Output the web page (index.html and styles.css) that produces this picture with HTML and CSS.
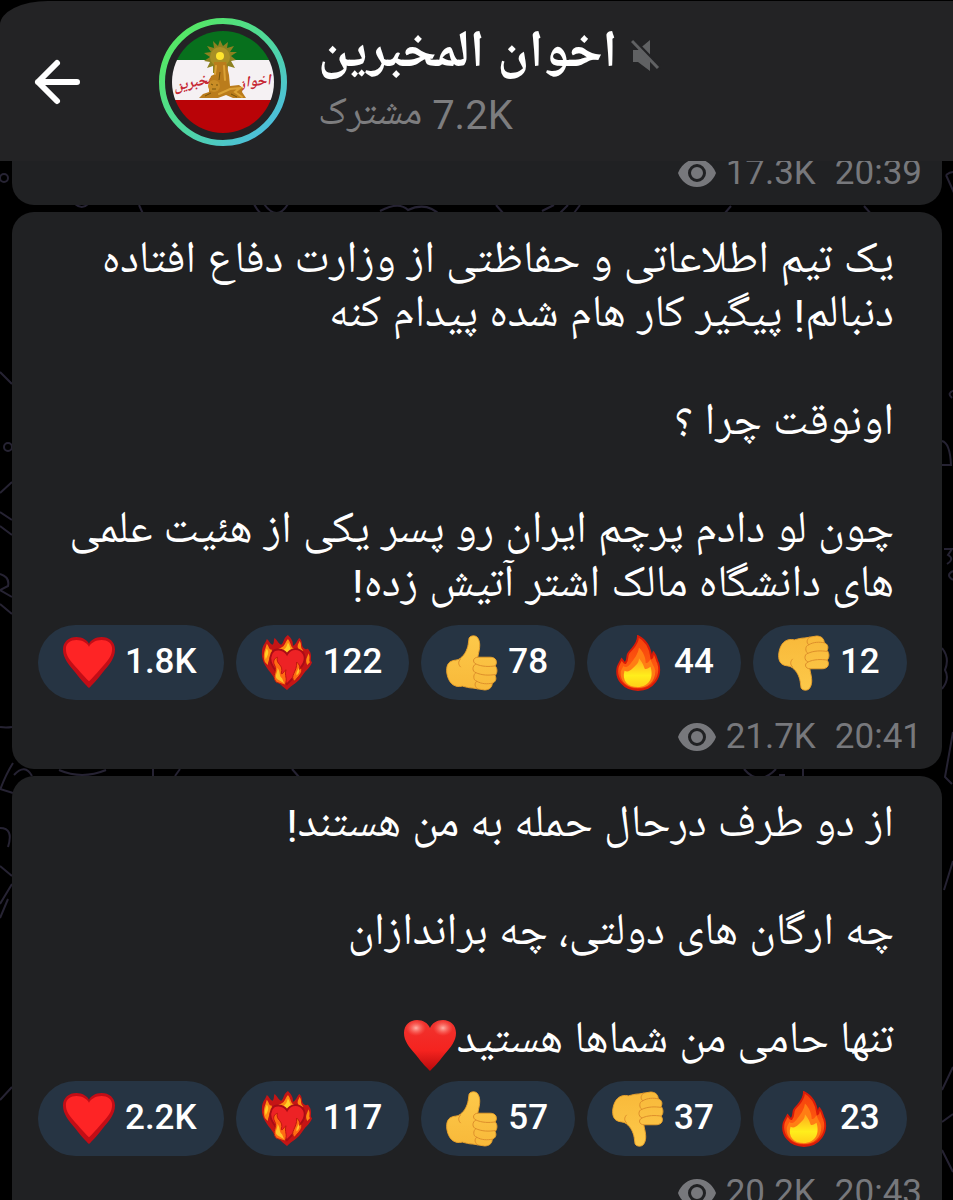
FILE: index.html
```html
<!DOCTYPE html>
<html lang="fa">
  <head>
    <meta charset="UTF-8" />
    <meta name="viewport" content="width=device-width, initial-scale=1.0" />
    <title>اخوان المخبرین</title>
    <link rel="stylesheet" href="styles.css">
  </head>
  <body>
    <!-- shared icons -->
    <svg class="sprite" aria-hidden="true">
      <defs>
        <linearGradient id="flame-outer" x1="0" y1="0" x2="0" y2="1">
          <stop offset="0" stop-color="#f4400c" />
          <stop offset="0.6" stop-color="#ff5a10" />
          <stop offset="1" stop-color="#e62a08" />
        </linearGradient>
        <linearGradient id="flame-inner" x1="0" y1="0" x2="0" y2="1">
          <stop offset="0" stop-color="#ffa81c" />
          <stop offset="0.6" stop-color="#ffee1c" />
          <stop offset="1" stop-color="#ffd018" />
        </linearGradient>
        <linearGradient id="thumb-fill" x1="0" y1="0" x2="0" y2="1">
          <stop offset="0" stop-color="#fdc94a" />
          <stop offset="1" stop-color="#f8b93a" />
        </linearGradient>
        <linearGradient id="heart-red" x1="0" y1="0" x2="0" y2="1">
          <stop offset="0" stop-color="#f0342f" />
          <stop offset="0.6" stop-color="#f5231f" />
          <stop offset="1" stop-color="#b80a0c" />
        </linearGradient>
        <radialGradient id="gloss">
          <stop offset="0" stop-color="#ffb3a8" />
          <stop offset="1" stop-color="#ff6a60" stop-opacity="0" />
        </radialGradient>
      </defs>
      <symbol id="heart" viewBox="0 0 54 58">
        <path d="M27 55C24 52 19 47 13 39C6 31 0 24 0 15C0 7 6 2 14 2C20 2 25 5 27 9C29 5 34 2 40 2C48 2 54 7 54 15C54 24 48 31 41 39C35 47 30 52 27 55Z" fill="#c30d16" />
        <path d="M27 48C24 45 20 41 15 35C7 26 3 22 3 14C3 8 8 5 14 5C20 5 25 8 27 12C29 8 34 5 40 5C46 5 51 8 51 14C51 22 47 26 39 35C34 41 30 45 27 48Z" fill="#fe2425" />
      </symbol>
      <symbol id="heart-gloss" viewBox="0 0 54 58">
        <path d="M27 54C24 51 19 46 13 38C6 30 1 24 1 16C1 8 7 3 14 3C20 3 25 6 27 11C29 6 34 3 40 3C47 3 53 8 53 16C53 24 48 30 41 38C35 46 30 51 27 54Z" fill="url(#heart-red)" />
        <ellipse cx="13" cy="11" rx="10" ry="8" fill="url(#gloss)" />
        <ellipse cx="40" cy="11" rx="10" ry="8" fill="url(#gloss)" />
      </symbol>
      <symbol id="heart-fire" viewBox="0 0 54 58">
        <path d="M27 57C21 52 15 47 10 39C4 32 0 25 1 17C1 11 5 8 6 4C9 6 9 9 12 10C14 8 13 5 14 3C17 5 18 9 21 10C24 8 23 3 28 0C31 3 34 7 33 11C37 10 37 5 40 3C44 7 41 11 45 14C48 16 48 12 50 16C54 21 50 27 53 28C52 33 47 36 43 42C39 49 32 52 27 57Z" fill="#c51515" />
        <path d="M4 28C1 20 5 14 6 9C9 13 8 15 11 15C13 20 8 23 7 31ZM18 14C25 13 25 7 28 4C32 9 30 13 36 15L27 19ZM38 12C38 9 40 8 40 6C43 10 40 13 44 16L40 18ZM48 31C45 25 49 23 49 19C52 23 49 27 51 28Z" fill="#ff8a12" />
        <path d="M23 16C27 13 27 10 28 8C31 12 29 14 33 16L27 18ZM5 25C3 20 5 17 6 14C9 18 7 21 5 25Z" fill="#ffcf27" />
        <path d="M27 51C22 47 19 43 16 38C10 30 8 25 11 19C14 13 23 14 27 20C31 13 40 13 44 19C48 26 43 32 38 38C35 43 31 47 27 51Z" fill="#ed2225" stroke="#a90d16" stroke-width="2" />
        <path d="M16 49C10 42 18 38 14 31C12 27 14 24 17 23C15 31 24 30 21 40C23 41 24 37 26 36C24 43 28 44 25 52ZM35 48C29 43 38 38 37 28C44 34 37 38 42 34C44 40 38 43 35 48Z" fill="#ff6b13" stroke="#bc160e" stroke-width="1" />
        <path d="M17 46C13 42 18 39 17 34C21 39 18 42 22 45L24 50ZM37 42C36 38 39 36 39 34C41 38 39 40 37 42Z" fill="#ffc329" />
      </symbol>
      <symbol id="thumb" viewBox="0 0 54 58">
        <path d="M24 3C26 0 31 0 33 3C37 9 34 17 33 23H46C52 23 54 28 51 32C54 35 53 40 51 42C53 46 51 49 48 50C48 55 44 57 40 57L28 55C24 55 21 54 17 53C9 55 4 50 2 44C0 38 0 31 4 28C8 25 12 27 15 24C20 20 22 15 23 10Z" fill="url(#thumb-fill)" stroke="#e9a02b" stroke-width="1" />
        <path d="M33 23C28 23 27 28 31 30C27 32 27 38 31 39C28 41 28 47 32 48C29 50 30 54 33 56M31 30C37 33 45 33 51 32M31 39C37 42 45 42 51 41M32 48C37 51 43 51 48 50M15 25C12 28 13 31 15 33" fill="none" stroke="#dc8c2a" stroke-width="1" stroke-linecap="round" />
      </symbol>
      <symbol id="thumb-down" viewBox="0 0 54 58">
        <use href="#thumb" width="54" height="58" transform="matrix(1 0 0 -1 0 58)" />
      </symbol>
      <symbol id="fire" viewBox="0 0 54 58">
        <path d="M27 1C35 5 40 13 41 24C43 23 42 20 43 18C47 23 46 26 48 29C52 43 43 57 27 57C12 57 3 45 6 33C7 30 9 27 10 25C12 27 12 29 14 29C17 25 15 22 17 19C20 14 27 11 27 1Z" fill="url(#flame-outer)" stroke="#d91b08" stroke-width="2" />
        <path d="M28 13C32 17 35 23 35 29C38 29 39 26 40 25C42 31 44 32 45 37C45 49 37 55 27 55C16 55 8 48 9 38C10 35 11 34 12 32C15 35 17 32 19 30C23 25 27 20 28 13Z" fill="#ff7d14" />
        <path d="M28 24C32 29 33 32 34 35C36 36 38 34 40 33C44 46 37 54 27 54C16 54 10 47 13 37C16 39 19 37 21 35C25 31 28 29 28 24Z" fill="url(#flame-inner)" />
      </symbol>
      <symbol id="eye" viewBox="0 0 38 28">
        <path fill-rule="evenodd" d="M19 0C10 0 3 6 0 14C3 22 10 28 19 28C28 28 35 22 38 14C35 6 28 0 19 0ZM19 5A9 9 0 0 1 19 23A9 9 0 0 1 19 5ZM19 8A6 6 0 0 0 19 20A6 6 0 0 0 19 8Z" fill="currentColor" />
      </symbol>
    </svg>

    <div class="chat">
      <header class="header">
        <button class="back" type="button" aria-label="بازگشت">
          <svg width="48" height="48" viewBox="0 0 48 48" fill="none" stroke="#fff" stroke-width="6" stroke-linecap="round" stroke-linejoin="round">
            <path d="M25 5L6 24L25 43M6 24H45" />
          </svg>
        </button>
        <svg class="avatar" viewBox="0 0 128 128">
          <defs>
            <linearGradient id="ring" x1="0.1" y1="0.1" x2="0.9" y2="0.9">
              <stop offset="0" stop-color="#55e860" />
              <stop offset="0.5" stop-color="#4fd99a" />
              <stop offset="1" stop-color="#4cbde0" />
            </linearGradient>
            <clipPath id="round"><circle cx="64" cy="64" r="51" /></clipPath>
          </defs>
          <circle cx="64" cy="64" r="61" fill="none" stroke="url(#ring)" stroke-width="6" />
          <g clip-path="url(#round)">
            <path d="M0 0H128V42H0Z" fill="#07701d" />
            <path d="M0 42H128V82H0Z" fill="#f5f1f3" />
            <path d="M0 82H128V128H0Z" fill="#b90307" />
          </g>
          <text class="avatar-text" x="95" y="68" transform="rotate(-6 95 68)">اخوان</text>
          <text class="avatar-text" x="39" y="68" transform="rotate(-12 39 68)">المخبرین</text>
          <!-- lion and sun -->
          <path d="M61 22L64 28L69 24L68 30L75 28L71 34L78 34L72 38L77 42L72 43L76 50L69 48L68 55L54 55L54 48L48 50L51 44L45 43L51 39L45 35L52 34L48 28L55 30L54 23L59 28Z" fill="#8d8120" />
          <circle cx="61" cy="39" r="10" fill="#a99025" />
          <circle cx="61" cy="38" r="4" fill="#ffe52e" />
          <path d="M55 44H67L70 57L71 68L80 67L84 70L83 74L87 80H74L67 77L59 80H40L44 76L50 74L50 66L52 58L56 56Z" fill="#ba7c1c" />
          <path d="M60 76L71 71L81 70L76 74L83 79M57 48L56 56M65 48L66 62" fill="none" stroke="#dba236" stroke-width="2" stroke-linecap="round" />
          <circle cx="55" cy="68" r="6" fill="#c98d26" />
          <path d="M52 66L54 67M57 67H59M53 71L57 71M52 75L46 78M61 54L60 62M72 76L78 79" fill="none" stroke="#75530c" stroke-width="1" />
        </svg>
        <div class="channel">
          <div class="title-row">
            <h1 dir="rtl">اخوان المخبرین</h1>
            <svg class="muted" viewBox="0 0 30 34">
              <path d="M2 11H7L19 1V32L7 23H2Z" fill="#606163" />
              <path d="M1 -1L30 29" stroke="#232325" stroke-width="3" />
              <path d="M1 2L27 29" stroke="#606163" stroke-width="3" />
            </svg>
          </div>
          <p class="subscribers" dir="rtl">7.2K مشترک</p>
        </div>
      </header>

      <main class="feed">
        <svg class="doodles" viewBox="0 0 953 1200" preserveAspectRatio="xMidYMin slice" aria-hidden="true">
          <circle cx="4" cy="178" r="4" />
          <circle cx="8" cy="447" r="4" />
          <path d="M75 204Q82 210 88 204M139 205L144 216M254 204Q259 214 266 217M264 204Q277 222 288 204M380 211Q399 201 408 210Q427 201 441 216M496 205L503 213M542 211L554 205M560 213L568 205M574 213L580 205M725 213L731 206M864 206L872 215" />
          <path d="M946 175Q958 166 962 184M946 175L955 195M0 372L12 384M0 493L12 482M0 512L12 520M0 526L12 535M0 574Q10 577 8 586L0 590L12 597M0 604L12 614M0 727Q6 728 12 727M0 790Q6 774 13 763M14 775Q25 763 32 776M0 789L13 793M59 770Q82 780 106 770M153 769V777M175 776L180 769M292 769L299 777M744 769Q759 787 776 769M779 775H785M803 769V776" />
          <path d="M955 390Q946 393 952 398M942 441Q950 443 951 465H942M944 549H952L948 555Q955 559 947 564M953 571Q945 575 953 580M942 648Q950 658 945 670Q950 679 942 689M953 732L945 777L952 784M0 828Q14 828 8 847M0 866L12 876M0 904L12 884M0 918L8 899M953 861L944 890M953 1067L942 1090M942 1122L953 1114M942 1150L953 1172M0 1100L12 1087" />
        </svg>

        <article class="message first">
          <div class="meta">
            <svg class="views-icon"><use href="#eye" /></svg>
            <span>17.3K</span>
            <time>20:39</time>
          </div>
        </article>

        <article class="message">
          <p class="text" dir="rtl">یک تیم اطلاعاتی و حفاظتی از وزارت دفاع افتاده<br>دنبالم! پیگیر کار هام شده پیدام کنه<br><br>اونوقت چرا ؟<br><br>چون لو دادم پرچم ایران رو پسر یکی از هئیت علمی<br>های دانشگاه مالک اشتر آتیش زده!</p>
          <div class="reactions">
            <button type="button"><svg class="emoji"><use href="#heart" /></svg><span class="count">1.8K</span></button>
            <button type="button"><svg class="emoji"><use href="#heart-fire" /></svg><span class="count">122</span></button>
            <button type="button"><svg class="emoji"><use href="#thumb" /></svg><span class="count">78</span></button>
            <button type="button"><svg class="emoji"><use href="#fire" /></svg><span class="count">44</span></button>
            <button type="button"><svg class="emoji"><use href="#thumb-down" /></svg><span class="count">12</span></button>
          </div>
          <div class="meta">
            <svg class="views-icon"><use href="#eye" /></svg>
            <span>21.7K</span>
            <time>20:41</time>
          </div>
        </article>

        <article class="message">
          <p class="text" dir="rtl">از دو طرف درحال حمله به من هستند!<br><br>چه ارگان های دولتی، چه براندازان<br><br>تنها حامی من شماها هستید<svg class="inline-heart"><use href="#heart-gloss" /></svg></p>
          <div class="reactions">
            <button type="button"><svg class="emoji"><use href="#heart" /></svg><span class="count">2.2K</span></button>
            <button type="button"><svg class="emoji"><use href="#heart-fire" /></svg><span class="count">117</span></button>
            <button type="button"><svg class="emoji"><use href="#thumb" /></svg><span class="count">57</span></button>
            <button type="button"><svg class="emoji"><use href="#thumb-down" /></svg><span class="count">37</span></button>
            <button type="button"><svg class="emoji"><use href="#fire" /></svg><span class="count">23</span></button>
          </div>
          <div class="meta">
            <svg class="views-icon"><use href="#eye" /></svg>
            <span>20.2K</span>
            <time>20:43</time>
          </div>
        </article>
      </main>
    </div>
  </body>
</html>
```

FILE: styles.css
```css
* {
  box-sizing: border-box;
}
body {
  margin: 0;
  background: #000;
  color: #fff;
  font-family: Roboto, 'Noto Naskh Arabic UI', 'Noto Naskh Arabic', 'Noto Sans Arabic', 'DejaVu Sans', sans-serif;
}
h1,
p {
  margin: 0;
}
button {
  border: 0;
  padding: 0;
  background: none;
  color: inherit;
  font-family: inherit;
  cursor: pointer;
}
.sprite {
  position: absolute;
  width: 0;
  height: 0;
}
.chat {
  display: flex;
  flex-direction: column;
  height: 100vh;
  overflow: hidden;
}
.header {
  display: flex;
  align-items: center;
  flex-shrink: 0;
  margin-top: 1px;
  padding: 17px 32px 15px;
  background: #232325;
  border-top-left-radius: 48px 24px;
}
.back {
  display: flex;
}
.avatar {
  width: 128px;
  height: 128px;
  margin-left: 79px;
}
.avatar-text {
  font-family: 'Noto Naskh Arabic', 'DejaVu Sans', sans-serif;
  font-size: 15px;
  font-weight: bold;
  font-style: italic;
  fill: #c62835;
  text-anchor: middle;
}
.channel {
  margin-left: 31px;
  padding-top: 3px;
}
.title-row {
  display: flex;
  align-items: center;
  gap: 14px;
}
.title-row h1 {
  font-size: 52px;
  line-height: 64px;
  font-weight: bold;
}
.muted {
  width: 30px;
  height: 34px;
}
.subscribers {
  width: fit-content;
  font-size: 40px;
  line-height: 56px;
  color: #7d7d7f;
}
.feed {
  position: relative;
  flex: 1;
  display: flex;
  flex-direction: column;
  gap: 7px;
  min-height: 0;
  padding: 0 11px 0 12px;
  overflow: hidden;
}
.doodles {
  position: absolute;
  top: -161px;
  left: 0;
  width: 100%;
  height: 1200px;
  fill: none;
  stroke: #262333;
  stroke-width: 2;
}
.message {
  position: relative;
  flex-shrink: 0;
  padding: 24px 20px 12px 26px;
  background: #202123;
  border-radius: 22px;
}
.message.first {
  margin-top: -32px;
}
.text {
  margin-right: 28px;
  font-size: 45px;
  line-height: 54px;
}
.inline-heart {
  width: 54px;
  height: 58px;
  margin: -12px 0;
  vertical-align: middle;
}
.reactions {
  display: flex;
  flex-wrap: wrap;
  gap: 12px;
  margin-top: 11px;
}
.reactions button {
  display: flex;
  align-items: center;
  gap: 10px;
  height: 75px;
  padding: 0 27px 0 25px;
  border-radius: 38px;
  background: #263443;
  font-size: 35px;
  font-weight: 500;
}
.count {
  padding-bottom: 2px;
}
.emoji {
  width: 52px;
  height: 56px;
}
.meta {
  display: flex;
  align-items: center;
  justify-content: flex-end;
  margin-top: 17px;
  font-size: 35px;
  line-height: 40px;
  color: #77787c;
}
.message.first .meta {
  margin-top: 0;
}
.views-icon {
  width: 38px;
  height: 28px;
  margin-right: 10px;
}
.meta time {
  margin-left: 19px;
}
```
